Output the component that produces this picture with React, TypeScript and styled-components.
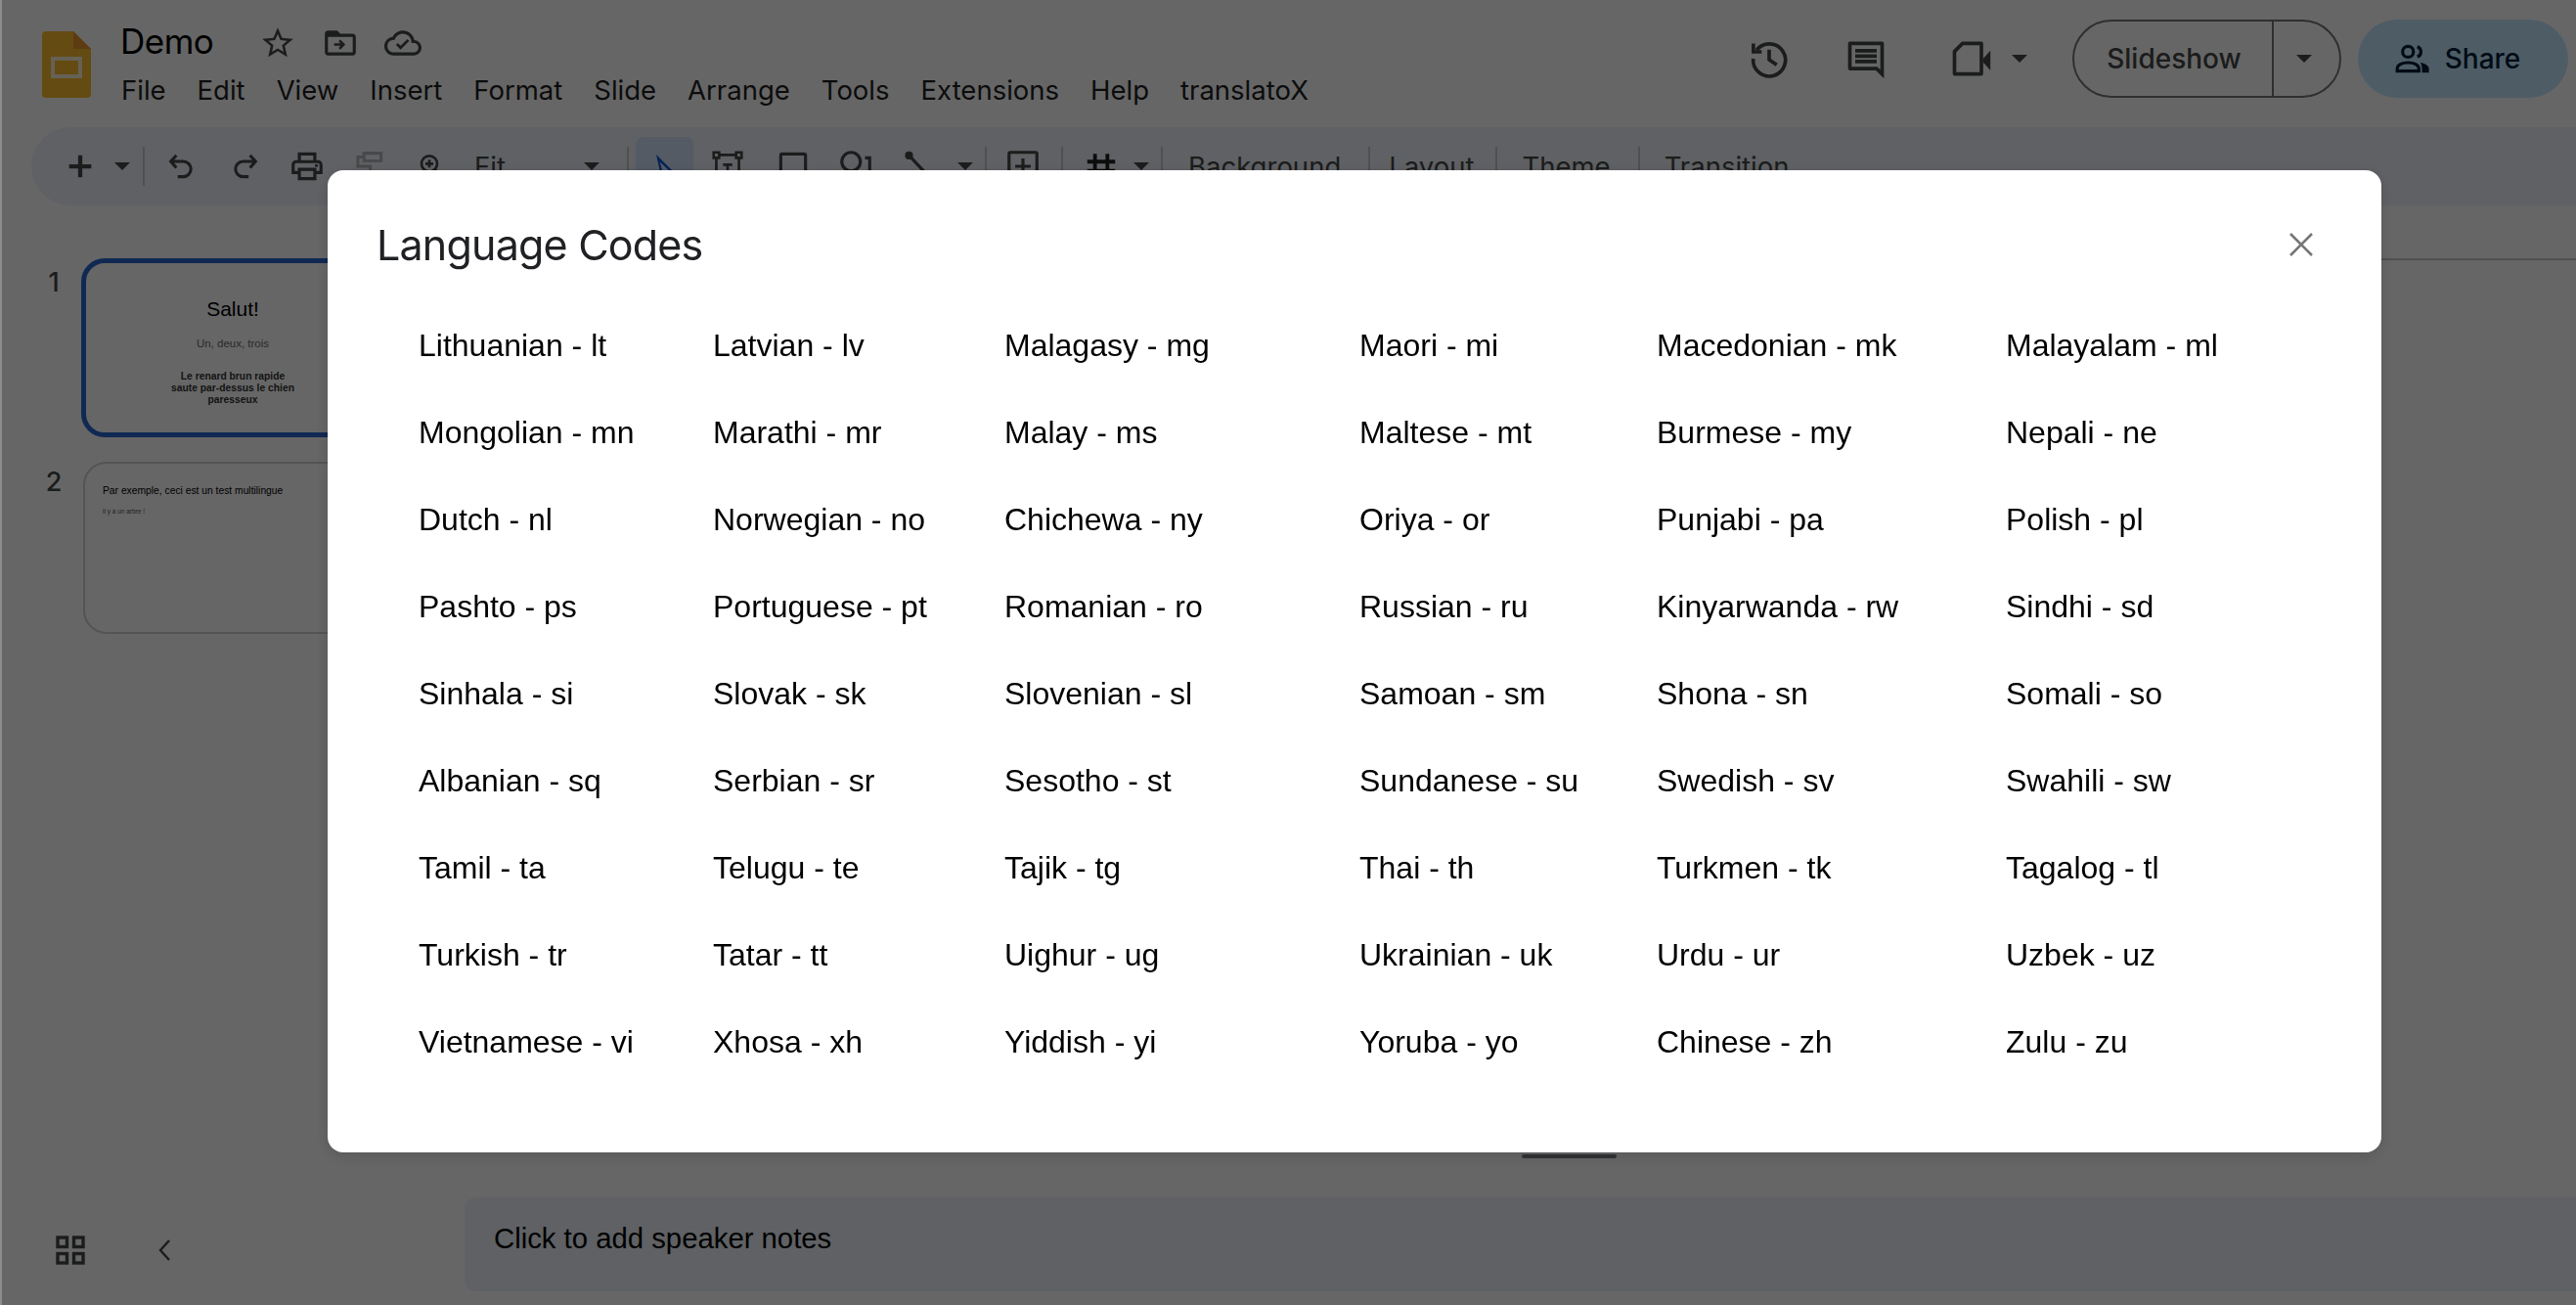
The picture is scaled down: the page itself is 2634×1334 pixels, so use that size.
import React from 'react';
import styled, { createGlobalStyle } from 'styled-components';

const GlobalStyle = createGlobalStyle`
  html, body { margin: 0; padding: 0; background: #8c8c8c; overflow: hidden; }
  #root { width: 2634px; height: 1334px; }
`;

const UI_FONT = `Inter, Roboto, sans-serif`;
const BODY_FONT = `"Liberation Sans", Arial, sans-serif`;

const Page = styled.div`
  width: 2632px;
  height: 1334px;
  margin-left: 2px;
  background: #fff;
  display: flex;
  flex-direction: column;
  font-family: ${UI_FONT};
  color: #1f1f1f;
  overflow: hidden;
`;

const Overlay = styled.div`
  position: fixed;
  inset: 0 0 0 2px;
  background: rgba(0, 0, 0, 0.6);
`;

/* Barra do topo */
const Header = styled.header`
  height: 130px;
  flex: none;
  display: flex;
  align-items: flex-start;
  padding-left: 41px;
`;

const LogoMark = styled.svg`
  width: 50px;
  height: 68px;
  margin-top: 32px;
  flex: none;
`;

const TitleBlock = styled.div`
  margin-left: 30px;
  display: flex;
  flex-direction: column;
`;

const TitleRow = styled.div`
  height: 64px;
  display: flex;
  align-items: center;
  padding-top: 20px;
  box-sizing: border-box;
`;

const DocName = styled.span`
  font-size: 35px;
  letter-spacing: -0.5px;
  color: #000;
  width: 142px;
  line-height: 44px;
`;

const TitleIcon = styled.svg<{ $mr?: number }>`
  width: 38px;
  height: 38px;
  margin-top: 4px;
  margin-right: ${(p) => p.$mr ?? 0}px;
  color: #444746;
  flex: none;
`;

const MenuBar = styled.nav`
  display: flex;
  gap: 32px;
  margin-top: 8px;
  margin-left: 1px;
`;

const MenuItem = styled.span`
  font-size: 27.5px;
  line-height: 40px;
  color: #1f1f1f;
`;

const HeaderActions = styled.div`
  margin-left: auto;
  display: flex;
  align-items: center;
  height: 80px;
  margin-top: 20px;
  padding-right: 8px;
`;

const ActionIcon = styled.svg<{ $mr?: number }>`
  width: 44px;
  height: 44px;
  margin-right: ${(p) => p.$mr ?? 0}px;
  color: #444746;
  flex: none;
`;

const Caret = styled.span`
  display: block;
  width: 0;
  height: 0;
  border-left: 8px solid transparent;
  border-right: 8px solid transparent;
  border-top: 8px solid #444746;
  flex: none;
`;

const SlideshowPill = styled.div`
  width: 275px;
  height: 80px;
  box-sizing: border-box;
  border: 2px solid #747775;
  border-radius: 40px;
  display: flex;
  align-items: stretch;
  margin-left: 46px;
`;

const SlideshowLabel = styled.div`
  width: 204px;
  display: flex;
  align-items: center;
  justify-content: center;
  padding-left: 2px;
  box-sizing: border-box;
  font-size: 28px;
  font-weight: 500;
  color: #444746;
  border-right: 2px solid #747775;
`;

const SlideshowArrow = styled.div`
  flex: 1;
  display: flex;
  align-items: center;
  justify-content: center;
  padding-right: 6px;
`;

const ShareButton = styled.div`
  width: 215px;
  height: 80px;
  margin-left: 17px;
  padding-right: 12px;
  box-sizing: border-box;
  border-radius: 40px;
  background: #c2e7ff;
  display: flex;
  align-items: center;
  justify-content: center;
  gap: 14px;
  font-size: 28px;
  font-weight: 500;
  color: #001d35;
`;

const ShareIcon = styled.svg`
  width: 38px;
  height: 38px;
  color: #001d35;
`;

/* Barra de ferramentas */
const Toolbar = styled.div`
  height: 80px;
  flex: none;
  margin-left: 30px;
  padding-left: 28px;
  background: #edf2fa;
  border-radius: 40px 0 0 40px;
  display: flex;
  align-items: center;
`;

const ToolButton = styled.div<{ $w: number; $active?: boolean }>`
  width: ${(p) => p.$w}px;
  height: 60px;
  flex: none;
  display: flex;
  align-items: center;
  justify-content: center;
  border-radius: 8px;
  color: #444746;
  background: ${(p) => (p.$active ? '#d3e3fd' : 'transparent')};
`;

const ToolIcon = styled.svg<{ $size?: number; $muted?: boolean }>`
  width: ${(p) => p.$size ?? 38}px;
  height: ${(p) => p.$size ?? 38}px;
  color: ${(p) => (p.$muted ? '#b4b6b8' : '#444746')};
`;

const Divider = styled.span<{ $l?: number; $r?: number }>`
  width: 2px;
  height: 40px;
  flex: none;
  background: #c7c7c7;
  margin: 0 ${(p) => p.$r ?? 0}px 0 ${(p) => p.$l ?? 0}px;
`;

const ZoomSelect = styled.div`
  width: 154px;
  flex: none;
  padding: 0 11px 0 15px;
  box-sizing: border-box;
  display: flex;
  align-items: center;
  justify-content: space-between;
  font-size: 27.5px;
  color: #444746;
`;

const TextTool = styled.div<{ $pl: number; $pr: number }>`
  padding: 0 ${(p) => p.$pr}px 0 ${(p) => p.$pl}px;
  font-size: 27.5px;
  color: #444746;
  flex: none;
`;

/* Corpo: miniaturas + editor */
const Workspace = styled.div`
  flex: 1;
  display: flex;
  min-height: 0;
`;

const Filmstrip = styled.aside`
  width: 473px;
  flex: none;
  display: flex;
  flex-direction: column;
  padding: 54px 0 0 35px;
  box-sizing: border-box;
`;

const SlideRow = styled.div<{ $mb?: number }>`
  display: flex;
  align-items: flex-start;
  margin-bottom: ${(p) => p.$mb ?? 0}px;
`;

const SlideNumber = styled.span<{ $top: number }>`
  width: 36px;
  flex: none;
  font-size: 27px;
  font-weight: 500;
  line-height: 40px;
  color: #444746;
  text-align: center;
  margin-top: ${(p) => p.$top}px;
`;

const SlideThumb = styled.div<{ $current?: boolean }>`
  width: 310px;
  height: ${(p) => (p.$current ? 183 : 176)}px;
  box-sizing: border-box;
  flex: none;
  margin-left: ${(p) => (p.$current ? 10 : 12)}px;
  border: ${(p) => (p.$current ? '5px solid #2a66d0' : '2px solid #d0d2d4')};
  border-radius: 24px;
  background: #fff;
  display: flex;
  flex-direction: column;
`;

const CoverBody = styled.div`
  flex: 1;
  display: flex;
  flex-direction: column;
  align-items: center;
  font-family: ${BODY_FONT};
  text-align: center;
  padding-top: 32px;
`;

const CoverTitle = styled.div`
  font-size: 21px;
  line-height: 30px;
  color: #000;
`;

const CoverSub = styled.div`
  font-size: 11.5px;
  line-height: 14px;
  margin-top: 13px;
  color: #6a6a6a;
`;

const CoverText = styled.div`
  font-size: 10.3px;
  font-weight: 700;
  line-height: 12px;
  margin-top: 21px;
  color: #333;
`;

const SecondBody = styled.div`
  padding: 20px 18px;
  font-family: ${BODY_FONT};
`;

const SecondTitle = styled.div`
  font-size: 10.3px;
  line-height: 16px;
  color: #000;
`;

const SecondText = styled.div`
  font-size: 6.5px;
  line-height: 8px;
  margin-top: 9px;
  color: #555;
`;

const FilmstripFooter = styled.div`
  margin-top: auto;
  height: 100px;
  display: flex;
  align-items: flex-start;
  padding: 29px 0 0 20px;
  box-sizing: border-box;
`;

const GridGlyph = styled.svg`
  width: 30px;
  height: 30px;
  color: #444746;
`;

const ChevronGlyph = styled.svg`
  width: 14px;
  height: 24px;
  margin-left: 74px;
  margin-top: 3px;
  color: #444746;
`;

const Editor = styled.main`
  flex: 1;
  display: flex;
  flex-direction: column;
  min-width: 0;
`;

const RulerBar = styled.div`
  height: 56px;
  box-sizing: border-box;
  flex: none;
  border-bottom: 2px solid #c7c7c7;
`;

const Canvas = styled.div`
  flex: 1;
  display: flex;
  flex-direction: column;
  justify-content: flex-end;
  align-items: center;
  padding: 0 0 40px 100px;
  box-sizing: border-box;
`;

const ResizeHandle = styled.span`
  width: 97px;
  height: 4px;
  border-radius: 2px;
  background: #7b7f85;
`;

const NotesBox = styled.div`
  height: 96px;
  flex: none;
  margin-bottom: 14px;
  background: #edf2fa;
  border-radius: 12px 0 0 12px;
  padding: 0 0 12px 30px;
  box-sizing: border-box;
  display: flex;
  align-items: center;
  font-family: ${BODY_FONT};
  font-size: 29.3px;
  color: #000;
`;

/* Diálogo */
const Dialog = styled.section`
  position: fixed;
  left: 335px;
  top: 174px;
  width: 2100px;
  height: 1004px;
  background: #fff;
  border-radius: 16px;
  box-shadow: 0 4px 16px rgba(0, 0, 0, 0.15);
  padding: 0 50px;
  box-sizing: border-box;
`;

const DialogHeader = styled.div`
  height: 135px;
  display: flex;
  align-items: center;
  justify-content: space-between;
  padding-top: 17px;
  box-sizing: border-box;
`;

const DialogTitle = styled.h2`
  margin: 0;
  font-family: ${UI_FONT};
  font-size: 43px;
  font-weight: 400;
  letter-spacing: -0.8px;
  color: #202124;
`;

const CloseIcon = styled.svg`
  width: 26px;
  height: 26px;
  margin-right: 19px;
  color: #757575;
`;

const CodeGrid = styled.div`
  display: grid;
  grid-template-columns: 301px 298px 363px 304px 357px auto;
  grid-auto-rows: 89px;
  padding-left: 43px;
`;

const CodeItem = styled.div`
  display: flex;
  align-items: center;
  font-family: ${BODY_FONT};
  font-size: 32px;
  color: #000;
  white-space: nowrap;
`;

const CODES = [
  'Lithuanian - lt', 'Latvian - lv', 'Malagasy - mg', 'Maori - mi', 'Macedonian - mk', 'Malayalam - ml',
  'Mongolian - mn', 'Marathi - mr', 'Malay - ms', 'Maltese - mt', 'Burmese - my', 'Nepali - ne',
  'Dutch - nl', 'Norwegian - no', 'Chichewa - ny', 'Oriya - or', 'Punjabi - pa', 'Polish - pl',
  'Pashto - ps', 'Portuguese - pt', 'Romanian - ro', 'Russian - ru', 'Kinyarwanda - rw', 'Sindhi - sd',
  'Sinhala - si', 'Slovak - sk', 'Slovenian - sl', 'Samoan - sm', 'Shona - sn', 'Somali - so',
  'Albanian - sq', 'Serbian - sr', 'Sesotho - st', 'Sundanese - su', 'Swedish - sv', 'Swahili - sw',
  'Tamil - ta', 'Telugu - te', 'Tajik - tg', 'Thai - th', 'Turkmen - tk', 'Tagalog - tl',
  'Turkish - tr', 'Tatar - tt', 'Uighur - ug', 'Ukrainian - uk', 'Urdu - ur', 'Uzbek - uz',
  'Vietnamese - vi', 'Xhosa - xh', 'Yiddish - yi', 'Yoruba - yo', 'Chinese - zh', 'Zulu - zu',
];

const MENUS = ['File', 'Edit', 'View', 'Insert', 'Format', 'Slide', 'Arrange', 'Tools', 'Extensions', 'Help', 'translatoX'];

const App: React.FC = () => (
  <>
    <GlobalStyle />
    <Page>
      <Header>
        <LogoMark viewBox="0 0 50 68">
          <path d="M4 0h28l18 18v46a4 4 0 0 1-4 4H4a4 4 0 0 1-4-4V4a4 4 0 0 1 4-4z" fill="#fbbc2e" />
          <path d="M32 0l18 18H32z" fill="#e9962f" />
          <path d="M9 26h32v22H9zM13 30v14h24V30z" fill="#fff" fillRule="evenodd" opacity="0.8" />
        </LogoMark>
        <TitleBlock>
          <TitleRow>
            <DocName>Demo</DocName>
            <TitleIcon viewBox="0 0 24 24" fill="currentColor" $mr={26}>
              <path d="M22 9.24l-7.19-.62L12 2 9.19 8.63 2 9.24l5.46 4.73L5.82 21 12 17.27 18.18 21l-1.63-7.03L22 9.24zM12 15.4l-3.76 2.27 1-4.28-3.32-2.88 4.38-.38L12 6.1l1.71 4.04 4.38.38-3.32 2.88 1 4.28L12 15.4z" />
            </TitleIcon>
            <TitleIcon viewBox="0 0 24 24" fill="currentColor" $mr={26}>
              <path d="M20 6h-8l-2-2H4c-1.1 0-2 .9-2 2v12c0 1.1.9 2 2 2h16c1.1 0 2-.9 2-2V8c0-1.1-.9-2-2-2zm0 12H4V8h16v10z" />
              <path d="M12.16 12.2H8v1.6h4.16l-1.3 1.3L12 16.2l3.2-3.2L12 9.8l-1.14 1.1z" />
            </TitleIcon>
            <TitleIcon viewBox="0 0 24 24" fill="currentColor">
              <path d="M19.35 10.04C18.67 6.59 15.64 4 12 4 9.11 4 6.6 5.64 5.35 8.04 2.34 8.36 0 10.91 0 14c0 3.31 2.69 6 6 6h13c2.76 0 5-2.24 5-5 0-2.64-2.05-4.78-4.65-4.96zM19 18H6c-2.21 0-4-1.79-4-4s1.79-4 4-4h.71C7.37 7.69 9.48 6 12 6c3.04 0 5.5 2.46 5.5 5.5v.5H19c1.66 0 3 1.34 3 3s-1.34 3-3 3z" />
              <path d="M10.5 16.2l-3-3 1.2-1.2 1.8 1.8 4.4-4.4 1.2 1.2z" />
            </TitleIcon>
          </TitleRow>
          <MenuBar>
            {MENUS.map((m) => (
              <MenuItem key={m}>{m}</MenuItem>
            ))}
          </MenuBar>
        </TitleBlock>
        <HeaderActions>
          <ActionIcon viewBox="0 0 24 24" fill="none" stroke="currentColor" strokeWidth="2" $mr={55}>
            <path d="M5 7.2A9 9 0 1 1 3.1 12" />
            <path d="M3.2 3.6V8.2H7.8" />
            <path d="M12 7v5.6l4.2 2.8" />
          </ActionIcon>
          <ActionIcon viewBox="0 0 24 24" fill="currentColor" $mr={63}>
            <path fillRule="evenodd" d="M3 2.5h18a1 1 0 0 1 1 1V23l-4.5-4.5H3a1 1 0 0 1-1-1v-14a1 1 0 0 1 1-1zM4 4.5v12h14.3l1.7 1.7V4.5z" />
            <path d="M6 6.6h12v2H6zM6 9.6h12v2H6zM6 12.6h12v2H6z" />
          </ActionIcon>
          <ActionIcon viewBox="0 0 24 24" fill="none" stroke="currentColor" strokeWidth="2" $mr={20}>
            <path strokeLinejoin="round" d="M7.5 3.5H18v17H3V8z" />
            <path fill="currentColor" stroke="none" d="M19 12l4-4.5v11L19 14z" />
          </ActionIcon>
          <Caret />
          <SlideshowPill>
            <SlideshowLabel>Slideshow</SlideshowLabel>
            <SlideshowArrow>
              <Caret />
            </SlideshowArrow>
          </SlideshowPill>
          <ShareButton>
            <ShareIcon viewBox="0 0 24 24" fill="none" stroke="currentColor" strokeWidth="2">
              <circle cx="9" cy="7.5" r="3.5" />
              <path d="M2 20v-1.5c0-2.5 3.2-4 7-4s7 1.5 7 4V20z" />
              <path d="M15 4.2a3.5 3.5 0 0 1 0 6.6" />
              <path fill="currentColor" stroke="none" d="M17 14.5c3 .5 5.5 2 5.5 4V21H18v-2.5c0-1.5-.4-3-1-4z" />
            </ShareIcon>
            <span>Share</span>
          </ShareButton>
        </HeaderActions>
      </Header>

      <Toolbar>
        <ToolButton $w={44}>
          <ToolIcon viewBox="0 0 24 24" $size={34}>
            <path d="M12 4v16M4 12h16" stroke="currentColor" strokeWidth="3" fill="none" />
          </ToolIcon>
        </ToolButton>
        <ToolButton $w={42}><Caret /></ToolButton>
        <Divider $r={6} />
        <ToolButton $w={64}>
          <ToolIcon viewBox="0 0 24 24" fill="none" stroke="currentColor" strokeWidth="2.2" $size={34}>
            <path d="M8 4L4 8.5l4 4.5M4 8.5h9a5.5 5.5 0 0 1 0 11H9" />
          </ToolIcon>
        </ToolButton>
        <ToolButton $w={64}>
          <ToolIcon viewBox="0 0 24 24" fill="none" stroke="currentColor" strokeWidth="2.2" $size={34}>
            <path d="M16 4l4 4.5-4 4.5M20 8.5h-9a5.5 5.5 0 0 0 0 11h4" />
          </ToolIcon>
        </ToolButton>
        <ToolButton $w={64}>
          <ToolIcon viewBox="0 0 24 24" fill="currentColor">
            <path d="M19 8h-1V3H6v5H5c-1.66 0-3 1.34-3 3v6h4v4h12v-4h4v-6c0-1.66-1.34-3-3-3zM8 5h8v3H8V5zm8 12v2H8v-4h8v2zm2-2v-2H6v2H4v-4c0-.55.45-1 1-1h14c.55 0 1 .45 1 1v4h-2z" />
            <circle cx="18" cy="11.5" r="1" />
          </ToolIcon>
        </ToolButton>
        <ToolButton $w={62}>
          <ToolIcon viewBox="0 0 24 24" fill="none" stroke="currentColor" strokeWidth="2" $muted>
            <path d="M9 3.5h11v5H9zM9 6H5v6h8v8" />
          </ToolIcon>
        </ToolButton>
        <ToolButton $w={62}>
          <ToolIcon viewBox="0 0 24 24" fill="none" stroke="currentColor" strokeWidth="2" $size={32}>
            <circle cx="12" cy="10" r="6" />
            <path d="M12 7v6M9 10h6M16.5 14.5L21 19" />
          </ToolIcon>
        </ToolButton>
        <ZoomSelect>
          <span>Fit</span>
          <Caret />
        </ZoomSelect>
        <Divider $l={17} $r={7} />
        <ToolButton $w={59} $active>
          <ToolIcon viewBox="0 0 24 24" $size={36}>
            <path d="M6 4l14 14h-7l-3 4-4-18zM8.5 9l2.4 9 1.4-2.2h3.4z" fill="#0b57d0" fillRule="evenodd" />
          </ToolIcon>
        </ToolButton>
        <ToolButton $w={70}>
          <ToolIcon viewBox="0 0 24 24" fill="none" stroke="currentColor" strokeWidth="1.7">
            <path d="M3 3h3.5v3.5H3zM17.5 3H21v3.5h-3.5zM6.5 4.7h11M4.7 6.5v13M19.3 6.5v13M9 11h6M12 11v7" />
          </ToolIcon>
        </ToolButton>
        <ToolButton $w={64}>
          <ToolIcon viewBox="0 0 24 24" fill="none" stroke="currentColor" strokeWidth="2">
            <rect x="4" y="4" width="16" height="16" rx="1" />
          </ToolIcon>
        </ToolButton>
        <ToolButton $w={64}>
          <ToolIcon viewBox="0 0 24 24" fill="none" stroke="currentColor" strokeWidth="2">
            <circle cx="9" cy="9" r="6" />
            <path d="M18 6.5h3V21H9v-3" />
          </ToolIcon>
        </ToolButton>
        <ToolButton $w={64}>
          <ToolIcon viewBox="0 0 24 24" fill="none" stroke="currentColor" strokeWidth="2">
            <circle cx="6" cy="5" r="1.6" fill="currentColor" />
            <path d="M6 5l14 15" />
          </ToolIcon>
        </ToolButton>
        <ToolButton $w={32}><Caret /></ToolButton>
        <Divider $l={4} $r={6} />
        <ToolButton $w={62}>
          <ToolIcon viewBox="0 0 24 24" fill="none" stroke="currentColor" strokeWidth="2">
            <rect x="3" y="3" width="18" height="18" rx="1" />
            <path d="M12 7v10M7 12h10" />
          </ToolIcon>
        </ToolButton>
        <Divider $l={8} $r={8} />
        <ToolButton $w={62}>
          <ToolIcon viewBox="0 0 24 24" fill="none" stroke="#1f1f1f" strokeWidth="2.4">
            <path d="M8 4v16M16 4v16M3 9h18M3 15h18" />
          </ToolIcon>
        </ToolButton>
        <ToolButton $w={20}><Caret /></ToolButton>
        <Divider $l={10} />
        <TextTool $pl={26} $pr={28}>Background</TextTool>
        <Divider />
        <TextTool $pl={19} $pr={22}>Layout</TextTool>
        <Divider />
        <TextTool $pl={25} $pr={28}>Theme</TextTool>
        <Divider />
        <TextTool $pl={25} $pr={26}>Transition</TextTool>
      </Toolbar>

      <Workspace>
        <Filmstrip>
          <SlideRow $mb={25}>
            <SlideNumber $top={5}>1</SlideNumber>
            <SlideThumb $current>
              <CoverBody>
                <CoverTitle>Salut!</CoverTitle>
                <CoverSub>Un, deux, trois</CoverSub>
                <CoverText>
                  Le renard brun rapide
                  <br />
                  saute par-dessus le chien
                  <br />
                  paresseux
                </CoverText>
              </CoverBody>
            </SlideThumb>
          </SlideRow>
          <SlideRow>
            <SlideNumber $top={1}>2</SlideNumber>
            <SlideThumb>
              <SecondBody>
                <SecondTitle>Par exemple, ceci est un test multilingue</SecondTitle>
                <SecondText>il y a un arbre !</SecondText>
              </SecondBody>
            </SlideThumb>
          </SlideRow>
          <FilmstripFooter>
            <GridGlyph viewBox="0 0 30 30" fill="none" stroke="currentColor" strokeWidth="3.4">
              <rect x="2" y="2" width="9.5" height="9.5" />
              <rect x="18.5" y="2" width="9.5" height="9.5" />
              <rect x="2" y="18.5" width="9.5" height="9.5" />
              <rect x="18.5" y="18.5" width="9.5" height="9.5" />
            </GridGlyph>
            <ChevronGlyph viewBox="0 0 14 24" fill="none" stroke="currentColor" strokeWidth="2.4">
              <path d="M12 2L3 12l9 10" />
            </ChevronGlyph>
          </FilmstripFooter>
        </Filmstrip>
        <Editor>
          <RulerBar />
          <Canvas>
            <ResizeHandle />
          </Canvas>
          <NotesBox>Click to add speaker notes</NotesBox>
        </Editor>
      </Workspace>
    </Page>
    <Overlay />
    <Dialog>
      <DialogHeader>
        <DialogTitle>Language Codes</DialogTitle>
        <CloseIcon viewBox="0 0 26 26" fill="none" stroke="currentColor" strokeWidth="2.6">
          <path d="M2 2l22 22M24 2L2 24" />
        </CloseIcon>
      </DialogHeader>
      <CodeGrid>
        {CODES.map((c) => (
          <CodeItem key={c}>{c}</CodeItem>
        ))}
      </CodeGrid>
    </Dialog>
  </>
);

export default App;
